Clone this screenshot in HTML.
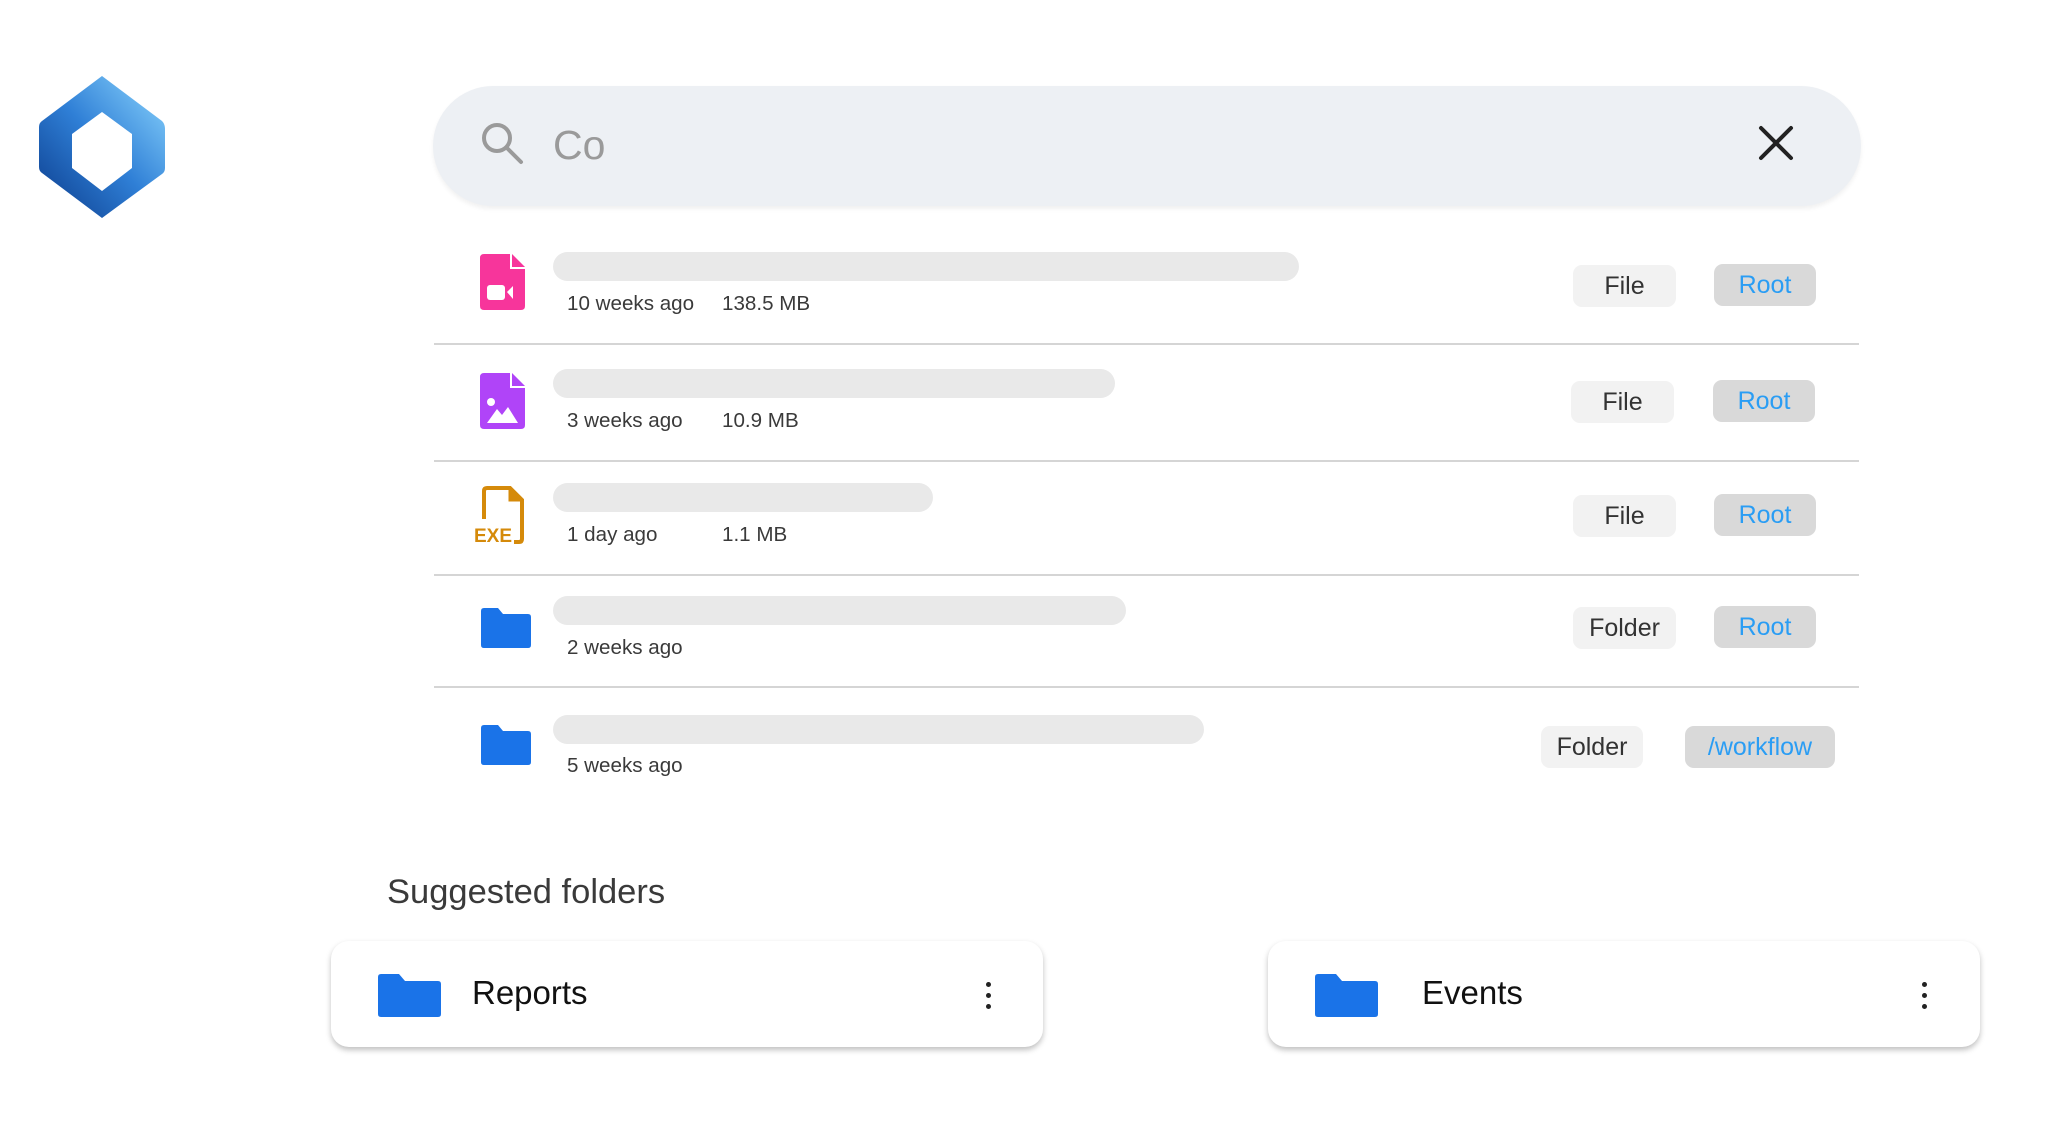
<!DOCTYPE html>
<html><head><meta charset="utf-8"><style>
*{margin:0;padding:0;box-sizing:border-box}
body{width:2049px;height:1145px;background:#fff;position:relative;overflow:hidden;font-family:"Liberation Sans",sans-serif;color:#333}
.a{position:absolute}
.bar{position:absolute;background:#e9e9e9;border-radius:15px;left:553px;height:29px}
.meta{position:absolute;font-size:20.6px;color:#3a3a3a}
.tag{position:absolute;height:42px;border-radius:9px;font-size:25px;display:flex;align-items:center;justify-content:center}
.t1{background:#f2f2f2;color:#333}
.t2{background:#d9d9d9;color:#2a9df4}
.div{position:absolute;left:434px;width:1425px;height:2px;background:#d5d5d5}
.card{position:absolute;top:941px;height:106px;width:712px;background:#fff;border-radius:18px;box-shadow:0 3px 6px rgba(0,0,0,.25)}
.dots{position:absolute;width:5px;height:5px;border-radius:50%;background:#222}
</style></head><body>
<svg class="a" style="left:37px;top:76px" width="130" height="142" viewBox="0 0 130 142">
<defs><linearGradient id="g" x1="0" y1="1" x2="1" y2="0"><stop offset="0" stop-color="#0a3a8a"/><stop offset=".5" stop-color="#2f7fd6"/><stop offset="1" stop-color="#8ed8ff"/></linearGradient></defs>
<path d="M65 0 L125 45 Q128 48 128 53 L128 92 Q128 96 125 98 L65 142 L5 97 Q2 95 2 91 L2 51 Q2 47 5 45 Z M65 36 L35 58 L35 92 L65 115 L95 92 L95 58 Z" fill="url(#g)" fill-rule="evenodd"/>
</svg>
<div class="a" style="left:433px;top:86px;width:1428px;height:120px;border-radius:60px;background:#edf0f4;box-shadow:0 3px 5px rgba(0,0,0,.06)"></div>
<svg class="a" style="left:479px;top:120px" width="48" height="48" viewBox="0 0 48 48"><circle cx="18" cy="18" r="13" fill="none" stroke="#9a9a9a" stroke-width="4"/><line x1="28" y1="28" x2="42" y2="42" stroke="#9a9a9a" stroke-width="4" stroke-linecap="round"/></svg>
<div class="a" style="left:553px;top:122px;font-size:41px;color:#9a9a9a">Co</div>
<svg class="a" style="left:1757px;top:124px" width="38" height="38" viewBox="0 0 38 38"><path d="M4 4L34 34M34 4L4 34" stroke="#222" stroke-width="4" stroke-linecap="round"/></svg>

<svg class="a" style="left:480px;top:254px" width="45" height="56" viewBox="0 0 45 56"><path d="M4 0H30V15H45V52Q45 56 41 56H4Q0 56 0 52V4Q0 0 4 0Z" fill="#f7359b"/><path d="M32 0L45 13H32Z" fill="#f7359b"/><rect x="7" y="31" width="18" height="15" rx="3" fill="#fff"/><path d="M27 38L33 32V45Z" fill="#fff"/></svg>
<div class="bar" style="top:252px;width:746px"></div>
<div class="meta" style="left:567px;top:292px">10 weeks ago</div><div class="meta" style="left:722px;top:292px">138.5 MB</div>
<div class="tag t1" style="left:1573px;top:265px;width:103px">File</div>
<div class="tag t2" style="left:1714px;top:264px;width:102px">Root</div>
<div class="div" style="top:343px"></div>

<svg class="a" style="left:480px;top:373px" width="45" height="56" viewBox="0 0 45 56"><path d="M4 0H30V15H45V52Q45 56 41 56H4Q0 56 0 52V4Q0 0 4 0Z" fill="#b044f8"/><path d="M32 0L45 13H32Z" fill="#b044f8"/><circle cx="11" cy="29" r="4" fill="#fff"/><path d="M7 50L17 36L22 42L28 34L38 50Z" fill="#fff"/></svg>
<div class="bar" style="top:369px;width:562px"></div>
<div class="meta" style="left:567px;top:409px">3 weeks ago</div><div class="meta" style="left:722px;top:409px">10.9 MB</div>
<div class="tag t1" style="left:1571px;top:381px;width:103px">File</div>
<div class="tag t2" style="left:1713px;top:380px;width:102px">Root</div>
<div class="div" style="top:460px"></div>

<svg class="a" style="left:472px;top:485px" width="62" height="60" viewBox="0 0 62 60"><path d="M12 34V6Q12 3 15 3H38L50 15V54Q50 57 47 57H42" fill="none" stroke="#d58a0a" stroke-width="4"/><path d="M38 3V15H50" fill="#d58a0a" stroke="#d58a0a" stroke-width="3"/><text x="2" y="57" font-family="Liberation Sans" font-weight="bold" font-size="19" fill="#d58a0a">EXE</text></svg>
<div class="bar" style="top:483px;width:380px"></div>
<div class="meta" style="left:567px;top:523px">1 day ago</div><div class="meta" style="left:722px;top:523px">1.1 MB</div>
<div class="tag t1" style="left:1573px;top:495px;width:103px">File</div>
<div class="tag t2" style="left:1714px;top:494px;width:102px">Root</div>
<div class="div" style="top:574px"></div>

<svg class="a" style="left:481px;top:608px" width="50" height="40" viewBox="0 0 50 40"><path d="M0 3Q0 0 3 0H17L22 6H47Q50 6 50 9V37Q50 40 47 40H3Q0 40 0 37Z" fill="#1a73e8"/></svg>
<div class="bar" style="top:596px;width:573px"></div>
<div class="meta" style="left:567px;top:636px">2 weeks ago</div>
<div class="tag t1" style="left:1573px;top:607px;width:103px">Folder</div>
<div class="tag t2" style="left:1714px;top:606px;width:102px">Root</div>
<div class="div" style="top:686px"></div>

<svg class="a" style="left:481px;top:725px" width="50" height="40" viewBox="0 0 50 40"><path d="M0 3Q0 0 3 0H17L22 6H47Q50 6 50 9V37Q50 40 47 40H3Q0 40 0 37Z" fill="#1a73e8"/></svg>
<div class="bar" style="top:715px;width:651px"></div>
<div class="meta" style="left:567px;top:754px">5 weeks ago</div>
<div class="tag t1" style="left:1541px;top:726px;width:102px">Folder</div>
<div class="tag t2" style="left:1685px;top:726px;width:150px">/workflow</div>

<div class="a" style="left:387px;top:873px;font-size:34.5px;color:#3a3a3a">Suggested folders</div>
<div class="card" style="left:331px">
<svg class="a" style="left:47px;top:33px" width="63" height="43" viewBox="0 0 63 43"><path d="M0 3Q0 0 3 0H21L27 7H60Q63 7 63 10V40Q63 43 60 43H3Q0 43 0 40Z" fill="#1a73e8"/></svg>
<div class="a" style="left:141px;top:33px;font-size:33px;color:#111">Reports</div>
<div class="dots" style="left:655px;top:41px"></div><div class="dots" style="left:655px;top:52px"></div><div class="dots" style="left:655px;top:63px"></div>
</div>
<div class="card" style="left:1268px">
<svg class="a" style="left:47px;top:33px" width="63" height="43" viewBox="0 0 63 43"><path d="M0 3Q0 0 3 0H21L27 7H60Q63 7 63 10V40Q63 43 60 43H3Q0 43 0 40Z" fill="#1a73e8"/></svg>
<div class="a" style="left:154px;top:33px;font-size:33px;color:#111">Events</div>
<div class="dots" style="left:654px;top:41px"></div><div class="dots" style="left:654px;top:52px"></div><div class="dots" style="left:654px;top:63px"></div>
</div>
</body></html>
